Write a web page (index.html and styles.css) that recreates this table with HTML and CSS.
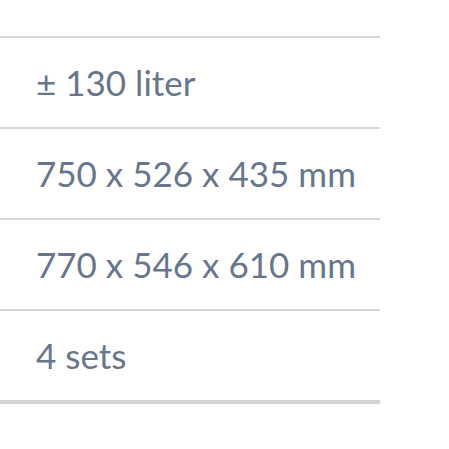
FILE: index.html
```html
<!DOCTYPE html>
<html>
<head>
<meta charset="utf-8">
<link rel="stylesheet" href="styles.css">
</head>
<body>
<div class="specs">
  <div class="spec-row">± 130 liter</div>
  <div class="spec-row">750 x 526 x 435 mm</div>
  <div class="spec-row">770 x 546 x 610 mm</div>
  <div class="spec-row spec-last">4 sets</div>
</div>
</body>
</html>
```
FILE: styles.css
```css
html, body {
  margin: 0;
  padding: 0;
  background: #ffffff;
}
.specs {
  margin-top: 36px;
  width: 380px;
}
.spec-row {
  box-sizing: border-box;
  height: 91px;
  border-top: 2px solid #d6d6d6;
  display: flex;
  align-items: center;
  padding: 0 0 2px 36px;
  font-family: Lato, "Open Sans", sans-serif;
  font-size: 35px;
  line-height: 42px;
  color: #67768a;
  white-space: nowrap;
}
.spec-last {
  height: 95px;
  border-bottom: 4px solid #d3d3d3;
}
```
